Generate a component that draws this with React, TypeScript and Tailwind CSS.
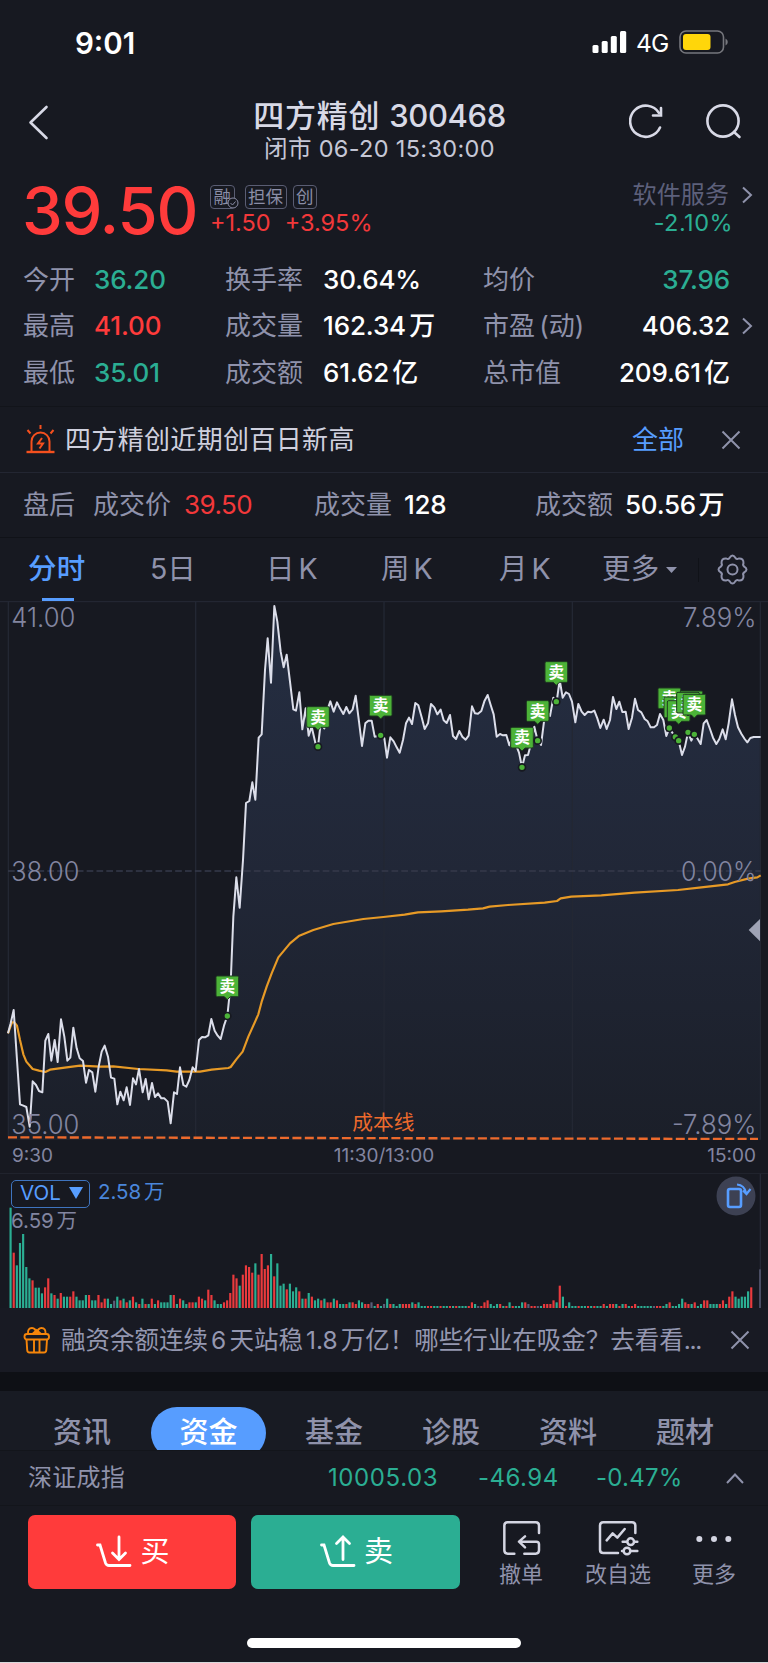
import type { ReactNode } from 'react';

// Chart geometry is in device pixels (3 units = 1 css px)
const PRICE =
  '24,1297 32,1267 41,1227 51,1377 60,1510 70,1514 79,1518 89,1577 98,1441 108,1452 117,1470 127,1474 136,1319 145,1299 154,1379 164,1317 173,1383 183,1255 193,1307 202,1379 211,1370 220,1280 230,1342 239,1372 249,1380 258,1445 267,1407 277,1414 286,1472 296,1397 305,1352 314,1334 324,1367 333,1430 343,1433 352,1510 361,1472 371,1498 380,1459 390,1512 399,1432 408,1450 417,1404 428,1474 437,1434 446,1495 456,1446 465,1488 474,1477 484,1492 493,1492 503,1502 512,1567 522,1474 531,1479 540,1399 550,1452 559,1457 568,1437 578,1399 587,1410 597,1317 606,1308 615,1309 625,1303 634,1254 644,1289 653,1304 662,1314 672,1274 682,1245 687,1197 693,1122 700,947 709,829 719,920 729,777 738,606 748,600 757,544 766,596 776,410 785,400 795,207 803,112 813,245 823,15 832,62 842,152 851,199 860,161 870,242 880,325 888,329 898,274 907,385 917,322 926,404 935,377 946,425 954,437 962,367 973,382 982,327 991,301 1001,332 1011,304 1020,322 1030,339 1039,318 1048,337 1058,325 1067,284 1077,362 1086,435 1096,367 1105,359 1115,359 1124,407 1142,403 1153,412 1161,470 1171,409 1181,421 1190,439 1199,455 1209,417 1218,367 1227,350 1236,369 1246,306 1255,313 1265,349 1274,384 1284,367 1293,309 1303,319 1312,340 1322,326 1331,358 1340,366 1350,342 1359,405 1368,414 1378,390 1387,407 1397,416 1406,404 1416,316 1425,337 1434,338 1444,330 1453,301 1463,282 1472,312 1481,340 1490,407 1500,399 1509,403 1519,402 1528,433 1538,407 1557,455 1566,499 1575,463 1584,462 1592,432 1603,377 1613,419 1623,432 1632,362 1641,332 1650,345 1660,290 1670,302 1679,237 1688,290 1698,274 1707,279 1716,302 1726,364 1735,309 1745,332 1754,342 1764,332 1773,334 1783,329 1792,352 1801,381 1811,356 1820,384 1830,357 1839,288 1849,324 1858,302 1867,333 1877,332 1886,384 1896,350 1905,293 1914,327 1924,334 1934,354 1943,361 1952,379 1962,379 1971,372 1980,339 1990,357 1999,405 2008,382 2026,408 2036,419 2046,462 2055,437 2064,394 2074,419 2083,400 2092,412 2102,429 2111,367 2120,357 2130,384 2139,410 2149,429 2158,414 2168,385 2177,415 2186,367 2196,295 2205,342 2214,379 2224,398 2234,414 2242,424 2251,411 2261,408 2282,408';

const AVERAGE =
  '24,1297 36,1264 43,1264 51,1274 60,1317 70,1360 79,1382 98,1404 117,1409 136,1413 150,1406 200,1399 240,1394 300,1397 340,1396 415,1404 500,1408 530,1412 600,1412 635,1406 685,1401 692,1398 709,1375 728,1352 745,1307 775,1240 785,1202 800,1157 815,1117 835,1069 870,1027 898,1004 940,987 1000,969 1090,954 1150,948 1214,941 1254,934 1324,931 1404,926 1449,922 1469,917 1524,912 1634,905 1671,900 1682,892 1714,887 1804,883 1904,875 2034,867 2104,859 2184,850 2204,843 2244,833 2272,829 2282,823';

const SELLS = [
  [682, 1245], [954, 437], [1142, 403], [1566, 499], [1613, 419], [1669, 302],
  [2008, 381], [2026, 408], [2036, 419], [2074, 390], [2064, 394], [2083, 400],
];

// height + direction, one entry per minute: r = up, g = down, n = flat
const VOLUME =
  '301g 166r 128g 195g 222g 123g 89g 83r 61g 61g 44g 62r 89r 44g 39r 28g 45r 34g 34g 34r 50r 34g 23g 23g 39g 39r 23g 23g 39r 17r 28r 28g 12g 22n 34g 23r 28g 17r 23g 34r 17g 12r 28g 12r 12g 28r 12g 23r 17g 17g 17g 39g 39r 12g 28r 23g 12g 17r 17r 17g 34r 28r 23g 55r 39r 23g 12g 12g 17r 23r 45r 100r 89r 67g 100r 128r 123r 106r 134g 100r 162r 117r 128r 162g 95r 134g 67g 73g 56r 73g 50g 62g 50r 28g 28r 45g 34r 23g 28g 23r 28g 17r 17r 28g 23r 12g 12g 12r 17g 17r 12r 23g 17g 12r 12r 17n 6g 12r 6g 12n 28g 12r 12g 6g 12g 12r 12r 12r 17g 12r 17g 6g 6g 6r 6r 6g 6g 6r 6g 6g 6r 6g 6r 6g 6g 6g 6r 17r 12g 6n 6r 17r 23r 12g 6g 12g 12r 6g 6r 17g 6r 6g 6g 17g 17r 12n 6r 6r 6n 6g 12r 12r 12r 23r 17g 67r 34g 6r 17g 6g 6g 6r 6g 6g 6r 6g 6r 6g 6g 12r 6g 12r 12r 12g 6r 12g 12r 6g 6r 12r 6g 6g 6g 6g 6g 6n 6r 6r 6g 12g 17r 6g 6g 12g 28g 17r 12r 12g 17r 6g 12g 23r 23r 12g 12g 12g 12r 23r 12g 34r 50r 34g 28g 34g 34g 50g 62r'
    .split(' ')
    .map((v) => ({ h: parseInt(v, 10), dir: v.slice(-1) }));

const BAR_COLORS: Record<string, string> = { r: '#e93a3d', g: '#2bae93', n: '#5b5e78' };

function StatusBar() {
  return (
    <div className="flex h-[84px] items-center justify-between pl-[75px] pr-[39px]">
      <span className="mt-[2px] text-[29.5px] font-semibold text-white">9:01</span>
      <div className="flex items-center">
        <svg className="h-6 w-9" viewBox="0 0 36 24" fill="#fff">
          <rect x="0.5" y="15" width="6" height="8" rx="1.5" />
          <rect x="9.7" y="11" width="6" height="12" rx="1.5" />
          <rect x="18.8" y="6" width="6" height="17" rx="1.5" />
          <rect x="28" y="1" width="6.2" height="22" rx="1.5" />
        </svg>
        <span className="mt-[2px] ml-[8px] w-[43px] whitespace-nowrap text-[24.5px] tracking-[-0.03em] text-white">4G</span>
        <svg className="h-6 w-[50px]" viewBox="0 0 50 24" fill="none">
          <rect x="1" y="1" width="43.5" height="22" rx="6" stroke="#76777d" strokeWidth="1.6" />
          <rect x="4" y="4" width="27.5" height="16" rx="3" fill="#ffd60a" />
          <path d="M46.500 8.500Q48.800 9.500 48.800 12T46.500 15.500Z" fill="#76777d" />
        </svg>
      </div>
    </div>
  );
}

function Header() {
  return (
    <div className="flex h-[92px] items-start justify-between pl-[28px] pr-[24px]">
      <svg className="mt-[20px] h-9 w-[102px]" viewBox="0 0 102 36" fill="none" stroke="#d8d9e6" strokeWidth="2.6" strokeLinecap="round" strokeLinejoin="round">
        <path d="M18.500 3L2.500 18.500L18.500 34" />
      </svg>
      <div className="flex flex-col items-center pt-[14px]">
        <h1 className="text-[31px] leading-9 font-medium whitespace-nowrap text-[#d8d9e6]">
          <span className="tracking-[0.025em]">四方精创 </span>
          <span className="tracking-[-0.012em]">300468</span>
        </h1>
        <p className="text-[23.5px] leading-[30px] tracking-[0.014em] whitespace-nowrap text-[#c5c7d6]">闭市 06-20 15:30:00</p>
      </div>
      <svg className="mt-[18px] h-10 w-[115px]" viewBox="0 0 115 40" fill="none" stroke="#d8d9e6" strokeWidth="2.6" strokeLinecap="round">
        <path d="M31 25.500A15.600 15.600 0 1 1 30 11" />
        <path d="M32 6V13.500H24" />
        <circle cx="94" cy="19" r="15.600" />
        <path d="M105 30L110.500 35" />
      </svg>
    </div>
  );
}

function Tag({ children, className = '' }: { children: ReactNode; className?: string }) {
  return (
    <span className={`relative flex h-6 items-center rounded-[4px] border border-[#5a5d73] px-[2.5px] text-[17.5px] leading-none text-[#8a8da6] ${className}`}>
      {children}
    </span>
  );
}

function Chevron() {
  return (
    <svg className="h-5 w-3" viewBox="0 0 12 20" fill="none" stroke="#8f92ab" strokeWidth="2">
      <path d="M2 2.500L10 10L2 17.500" />
    </svg>
  );
}

function Quote() {
  return (
    <div className="flex h-[80px] pl-[22px] pr-[15px]">
      <div className="w-[188px] text-[65px] leading-[69px] font-[450] tracking-[-0.018em] text-[#ff3b3b]">39.50</div>
      <div className="pt-[9px]">
        <div className="flex gap-[6px]">
          <Tag className="mr-[4px]">
            融
            <svg className="absolute -right-[5px] -bottom-px h-3 w-3" viewBox="0 0 12 12" fill="#171921" stroke="#8a8da6">
              <circle cx="6" cy="6" r="5" />
              <path d="M3.500 6L5.500 8L8.500 4.500" fill="none" />
            </svg>
          </Tag>
          <Tag>担保</Tag>
          <Tag>创</Tag>
        </div>
        <div className="flex gap-[14px] text-[23.5px] leading-7 text-[#f2383a]">
          <span>+1.50</span>
          <span>+3.95%</span>
        </div>
      </div>
      <div className="ml-auto flex flex-col items-end text-[24px] leading-7">
        <div className="flex items-center gap-[12px] pt-[5px] tracking-[0.005em] text-[#5d607b]">
          软件服务
          <Chevron />
        </div>
        <span className="mr-[20px] text-[23.5px] tracking-[0.02em] text-[#2bae93]">-2.10%</span>
      </div>
    </div>
  );
}

const STATS = [
  ['今开', '36.20', 'text-[#2bae93]', '换手率', '30.64%', '均价', '37.96', 'text-[#2bae93]'],
  ['最高', '41.00', 'text-[#ff3b3b]', '成交量', '162.34 万', '市盈 (动)', '406.32', 'text-white'],
  ['最低', '35.01', 'text-[#2bae93]', '成交额', '61.62 亿', '总市值', '209.61 亿', 'text-white'],
];

function Stats() {
  return (
    <div className="h-[150px]">
      {STATS.map((s, i) => (
        <div key={s[0]} className="flex h-[46.500px] items-center pl-[23px] pr-[15px] text-[26px] whitespace-nowrap text-[#8f92ab]">
          <span className="w-[71px]">{s[0]}</span>
          <span className={`w-[131px] font-[450] tracking-[-0.005em] ${s[2]}`}>{s[1]}</span>
          <span className="w-[98px]">{s[3]}</span>
          <span className="w-[160px] font-[450] tracking-[-0.005em] [word-spacing:-0.14em] text-white">{s[4]}</span>
          <span className="[word-spacing:-0.12em]">{s[5]}</span>
          <span className={`ml-auto mr-[11px] font-[450] tracking-[-0.005em] [word-spacing:-0.14em] ${s[7]}`}>{s[6]}</span>
          <span className="w-3">{i === 1 && <Chevron />}</span>
        </div>
      ))}
    </div>
  );
}

function CloseIcon({ className }: { className: string }) {
  return (
    <svg className={`h-5 w-5 ${className}`} viewBox="0 0 20 20" stroke="#8f92ab" strokeWidth="2">
      <path d="M1.500 1.500L18.500 18.500M18.500 1.500L1.500 18.500" />
    </svg>
  );
}

function Alert() {
  return (
    <div className="flex h-[66px] items-center border-t border-[#12141a] pl-[26px] pr-[27px] text-[26px]">
      <svg className="h-[29px] w-[29px]" viewBox="0 0 29 29" fill="none" stroke="#f5501e" strokeWidth="2">
        <path d="M5.500 26.500V16.500A9 9 0 0 1 23.500 16.500V26.500" />
        <path d="M0.500 27H28.500" strokeWidth="2.400" />
        <path d="M14.500 0V4M1.500 5L4.500 8.500M27.500 5L24.500 8.500" />
        <path d="M16 13L12 18.500H17L13.500 23.500" />
      </svg>
      <span className="ml-[10px] tracking-[0.013em] text-[#cfd0de]">四方精创近期创百日新高</span>
      <span className="ml-auto mr-[37px] text-[#579dff]">全部</span>
      <CloseIcon className="" />
    </div>
  );
}

function AfterHours() {
  return (
    <div className="flex h-[65px] items-center border-t border-[#232632] pb-[2px] pl-[23px] text-[26px] whitespace-nowrap text-[#8f92ab]">
      <span className="w-[70px]">盘后</span>
      <span className="w-[91px]">成交价</span>
      <span className="w-[130px] tracking-[-0.02em] text-[#f2383a]">39.50</span>
      <span className="w-[90px]">成交量</span>
      <span className="w-[131px] font-[450] tracking-[-0.01em] text-white">128</span>
      <span className="w-[90px]">成交额</span>
      <span className="font-[450] tracking-[-0.01em] [word-spacing:-0.16em] text-white">50.56 万</span>
    </div>
  );
}

function PeriodTabs() {
  return (
    <div className="flex h-[64px] items-center border-t border-[#101218] pl-[28px] text-[28.5px] whitespace-nowrap text-[#8f92ab] [word-spacing:-0.14em]">
      <span className="relative flex h-full w-[122px] items-center font-medium tracking-[0.01em] text-[#579dff]">
        分时
        <span className="absolute bottom-0 left-[14px] h-[3px] w-[32px] bg-[#579dff]" />
      </span>
      <span className="w-[116px]">5日</span>
      <span className="w-[115px]">日 K</span>
      <span className="w-[118px]">周 K</span>
      <span className="w-[103px]">月 K</span>
      <span className="tracking-[0.01em]">更多</span>
      <svg className="ml-[6px] h-[6px] w-[11px]" viewBox="0 0 11 6" fill="#8f92ab">
        <path d="M0 0H11L5.500 6Z" />
      </svg>
      <span className="ml-[21px] h-6 w-px bg-[#101218]" />
      <svg className="ml-[18px] h-[31px] w-[31px]" viewBox="0 0 31 31" fill="none" stroke="#8f92ab" strokeWidth="2" strokeLinejoin="round">
        <circle cx="15.500" cy="15.500" r="5" />
        <path d="M12.600 3.800Q15.500 -0.800 18.400 3.800Q19.800 5.600 21.700 4.500Q26.800 4.200 26.500 9.300Q25.400 11.200 27.200 12.600Q31.800 15.500 27.200 18.400Q25.400 19.800 26.500 21.700Q26.800 26.800 21.700 26.500Q19.800 25.400 18.400 27.200Q15.500 31.800 12.600 27.200Q11.200 25.400 9.300 26.500Q4.200 26.800 4.500 21.700Q5.600 19.800 3.800 18.400Q-0.800 15.500 3.800 12.600Q5.600 11.200 4.500 9.300Q4.200 4.200 9.300 4.500Q11.200 5.600 12.600 3.800Z" />
      </svg>
    </div>
  );
}

function PriceChart() {
  return (
    <svg className="block h-[539px] w-[768px]" viewBox="0 0 2304 1617" fill="none">
      <defs>
        <linearGradient id="area" x1="0" y1="0" x2="0" y2="1">
          <stop offset="0" stopColor="#252e42" />
          <stop offset="0.5" stopColor="#212737" />
          <stop offset="1" stopColor="#1b1f29" />
        </linearGradient>
      </defs>
      <polygon points={`24,1617 ${PRICE} 2282,1617`} fill="url(#area)" />
      <path d="M0 1.500H2304" stroke="#232632" strokeWidth="4" />
      <path d="M25 0V1617M587 0V1617M1152 0V1617M1717 0V1617M2281 0V1617" stroke="#232733" strokeWidth="4" />
      <path d="M24 1616H2282" stroke="#20232d" strokeWidth="3" />
      <path d="M24 810H2282" stroke="#363a4b" strokeWidth="5" strokeDasharray="20 9.500" />
      <polyline points={AVERAGE} stroke="#e79a26" strokeWidth="6.500" strokeLinejoin="round" />
      <polyline points={PRICE} stroke="#dcdeea" strokeWidth="6" strokeLinejoin="round" />
      <path d="M24 1609L2274 1614" stroke="#ed6a2c" strokeWidth="7" strokeDasharray="27 10.100" />
      <g fontSize="79" fontWeight="300" fill="#8285a0">
        <text x="34" y="79" textLength="192" lengthAdjust="spacingAndGlyphs">41.00</text>
        <text x="34" y="839" textLength="204" lengthAdjust="spacingAndGlyphs">38.00</text>
        <text x="34" y="1598" textLength="204" lengthAdjust="spacingAndGlyphs">35.00</text>
        <g textAnchor="end">
          <text x="2269" y="79" textLength="220" lengthAdjust="spacingAndGlyphs">7.89%</text>
          <text x="2269" y="839" textLength="226" lengthAdjust="spacingAndGlyphs">0.00%</text>
          <text x="2269" y="1598" textLength="253" lengthAdjust="spacingAndGlyphs">-7.89%</text>
        </g>
      </g>
      <text x="1150" y="1586" fontSize="62" fill="#ed6a2c" textAnchor="middle">成本线</text>
      <path d="M2246 987L2280 954V1021Z" fill="#9fa3b5" />
      {SELLS.map(([x, y]) => (
        <g key={`${x}-${y}`}>
          <path
            d={`M${x - 30} ${y - 120}H${x + 30}Q${x + 34} ${y - 120} ${x + 34} ${y - 116}V${y - 62}Q${x + 34} ${y - 58} ${x + 30} ${y - 58}H${x + 9}L${x} ${y - 49}L${x - 9} ${y - 58}H${x - 30}Q${x - 34} ${y - 58} ${x - 34} ${y - 62}V${y - 116}Q${x - 34} ${y - 120} ${x - 30} ${y - 120}Z`}
            fill="#4cb338"
            stroke="#1e3a20"
            strokeWidth="3"
          />
          <text x={x} y={y - 72} fontSize="47" fontWeight="600" fill="#fff" textAnchor="middle">卖</text>
        </g>
      ))}
      {SELLS.filter(([x]) => x !== 2074).map(([x, y]) => (
        <circle key={x} cx={x} cy={y} r="10.500" fill="#4cb338" stroke="#171921" strokeWidth="5" />
      ))}
    </svg>
  );
}

function Volume() {
  return (
    <div className="relative h-[135px] border-t border-[#20232d]">
      <svg className="block h-[134px] w-[768px]" viewBox="0 0 2304 402">
        {VOLUME.map((v, i) => (
          <rect key={i} x={28.5 + i * 9.415} y={402 - v.h} width="6.5" height={v.h} fill={BAR_COLORS[v.dir]} />
        ))}
        <path d="M2281 0V402" stroke="#252936" strokeWidth="4" />
        <rect x="2277" y="286" width="6" height="116" fill="#4a4d63" />
      </svg>
      <div className="absolute top-[3px] left-[11px] flex items-center text-[20.5px] text-[#4a86da]">
        <span className="flex h-[28px] w-[79px] items-center gap-[8px] rounded-[5px] border border-[#3f74bf] pb-px pl-[8px] text-[#579dff]">
          VOL
          <svg className="h-3 w-[14px]" viewBox="0 0 14 12" fill="#579dff">
            <path d="M0 0H14L7 12Z" />
          </svg>
        </span>
        <span className="mb-[3px] ml-[8px] [word-spacing:-0.15em]">2.58 万</span>
      </div>
      <span className="absolute top-[33px] left-[11px] text-[20.5px] leading-7 [word-spacing:-0.15em] text-[#8285a0]">6.59 万</span>
      <svg className="absolute top-[2px] right-[12px] h-10 w-10" viewBox="0 0 40 40" fill="none" stroke="#579dff" strokeWidth="2.600">
        <circle cx="20" cy="20" r="19.500" fill="#3d4153" stroke="none" />
        <rect x="12" y="13" width="13" height="18" rx="2" />
        <path d="M21 8.500Q28.500 9 30 17M34.500 13L30.500 18L27 14.500" strokeWidth="2.200" />
      </svg>
    </div>
  );
}

function Notice() {
  return (
    <div className="flex h-[64px] items-center bg-[#181a23] pl-[23px]">
      <svg className="h-[28px] w-[28px]" viewBox="0 0 28 28" fill="none" stroke="#f5850a" strokeWidth="1.900">
        <rect x="1.500" y="8" width="24.500" height="5.500" rx="2.500" />
        <path d="M3.500 13.500L4.200 24Q4.300 26.500 6.500 26.500H21Q23.200 26.500 23.300 24L24 13.500M11 14V26M16.500 14V26" />
        <path d="M5 8Q4.500 2 9 2Q12.500 2 13.700 7.500Q15 2 18.500 2Q23 2 22.500 8M9.500 8L13.700 4L18 8" />
      </svg>
      <span className="ml-[10px] w-[645px] text-[24.500px] whitespace-nowrap text-[#9497b0] [word-spacing:-0.155em]">
        融资余额连续 6 天站稳 1.8 万亿！哪些行业在吸金？去看看<span className="tracking-[-0.05em]">...</span>
      </span>
      <CloseIcon className="ml-[24px]" />
    </div>
  );
}

function SectionTabs() {
  return (
    <div className="flex h-[59px] items-start overflow-hidden bg-[#181b23] pt-[16px] text-[29px] leading-[52px] font-medium whitespace-nowrap text-[#8f92ab]">
      <span className="ml-[53px] w-[98px]">资讯</span>
      <span className="h-[52px] w-[115px] rounded-full bg-[#579dff] text-center text-white">资金</span>
      <span className="ml-[39px] w-[117px]">基金</span>
      <span className="w-[117px]">诊股</span>
      <span className="w-[117px]">资料</span>
      <span>题材</span>
    </div>
  );
}

function IndexBar() {
  return (
    <div className="flex h-[56px] items-center border-y border-[#13151b] pl-[28px] text-[24px] whitespace-nowrap text-[#2bae93]">
      <span className="w-[300px] tracking-[0.01em] text-[#8f92ab]">深证成指</span>
      <span className="w-[150px] tracking-[0.025em]">10005.03</span>
      <span className="w-[118px] tracking-[0.02em]">-46.94</span>
      <span className="w-[129px] tracking-[0.01em]">-0.47%</span>
      <svg className="h-3 w-5" viewBox="0 0 20 12" fill="none" stroke="#8f92ab" strokeWidth="2">
        <path d="M2 11L10 2.500L18 11" />
      </svg>
    </div>
  );
}

function Action({ label, className, children }: { label: string; className: string; children: ReactNode }) {
  return (
    <div className={`flex flex-col items-center text-[22px] leading-[31px] whitespace-nowrap text-[#8f92ab] ${className}`}>
      <svg className="h-[44px] w-[48px]" viewBox="0 0 144 132" fill="none" stroke="#d4d5e2" strokeWidth="7.500" strokeLinecap="round" strokeLinejoin="round">
        {children}
      </svg>
      <span>{label}</span>
    </div>
  );
}

function TradeBar() {
  return (
    <div className="flex h-[132px] items-start pt-[9px] pl-[28px]">
      <button className="flex h-[74px] w-[208px] items-center justify-center gap-[8px] rounded-[7px] bg-[#ff3b3b] pl-[2px] text-[29px] text-white">
        <svg className="h-9 w-9" viewBox="0 0 36 36" fill="none" stroke="#fff" strokeWidth="2.800" strokeLinecap="round">
          <path d="M1.500 11H4L9.500 29Q10.500 31.500 13 31.500H34" />
          <path d="M23 3V24.500M16.500 19L23 25.500L29.500 19" />
        </svg>
        买
      </button>
      <button className="ml-[15px] flex h-[74px] w-[209px] items-center justify-center gap-[8px] rounded-[7px] bg-[#2bae93] pl-[2px] text-[29px] text-white">
        <svg className="h-9 w-9" viewBox="0 0 36 36" fill="none" stroke="#fff" strokeWidth="2.800" strokeLinecap="round">
          <path d="M1.500 11H4L9.500 29Q10.500 31.500 13 31.500H34" />
          <path d="M23 25.500V4M16.500 9.500L23 3L29.500 9.500" />
        </svg>
        卖
      </button>
      <Action label="撤单" className="ml-[37px] w-[48px]">
        <path d="M126 54V32Q126 22 116 22H32Q22 22 22 32V106Q22 116 32 116H52M82 116H116Q126 116 126 106V88Q126 80 118 80H68M84 64L66 80L84 97" />
      </Action>
      <Action label="改自选" className="ml-[38px] w-[70px]">
        <path d="M124 54V32Q124 22 114 22H28Q18 22 18 32V104Q18 114 28 114H72M38 76L56 55L70 68L92 42M86 80H97M121 80H130M84 108H88M112 108H130" />
        <circle cx="110" cy="80" r="10" />
        <circle cx="99" cy="108" r="10" />
      </Action>
      <Action label="更多" className="ml-[37px] w-[48px]">
        <g fill="#d4d5e2" stroke="none">
          <circle cx="28" cy="72" r="9" />
          <circle cx="72" cy="72" r="9" />
          <circle cx="115" cy="72" r="9" />
        </g>
      </Action>
    </div>
  );
}

export default function App() {
  return (
    <div className="h-[1663px] w-[768px] overflow-hidden bg-[#171921] font-['Inter','Noto_Sans_CJK_SC',sans-serif]">
      <StatusBar />
      <Header />
      <Quote />
      <Stats />
      <Alert />
      <AfterHours />
      <PeriodTabs />
      <PriceChart />
      <div className="grid h-[33px] grid-cols-3 items-center px-[12px] text-[19px] text-[#8285a0]">
        <span>9:30</span>
        <span className="text-center">11:30/13:00</span>
        <span className="text-right">15:00</span>
      </div>
      <Volume />
      <Notice />
      <div className="h-[19px] bg-[#0e1015]" />
      <SectionTabs />
      <IndexBar />
      <TradeBar />
      <div className="mx-auto h-[10px] w-[274px] rounded-full bg-white" />
      <div className="mt-[14px] h-px bg-[#d9d9db]" />
    </div>
  );
}
